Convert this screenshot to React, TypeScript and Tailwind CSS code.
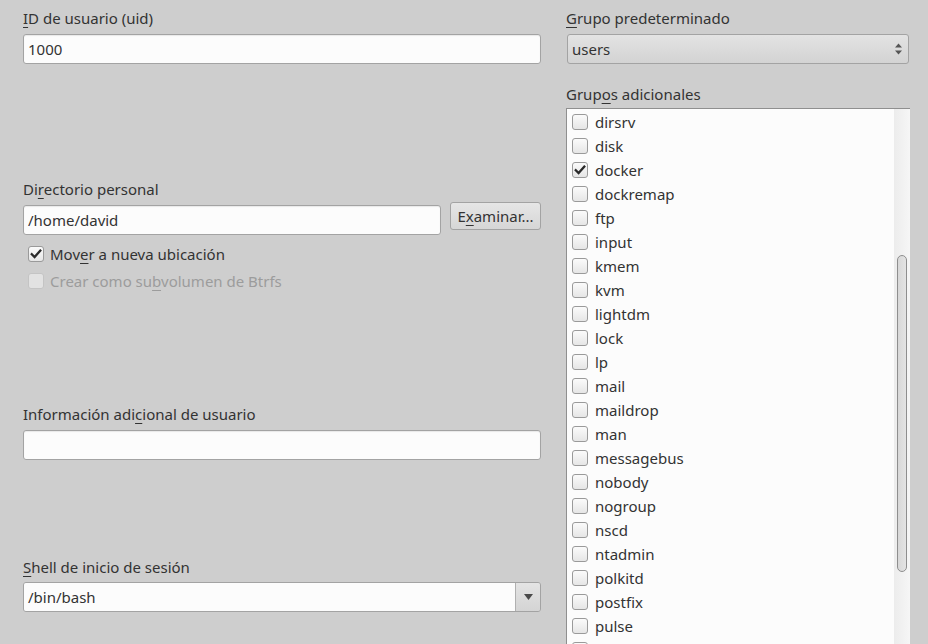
import React from "react";

const U = ({ children }: { children: React.ReactNode }) => (
  <span className="underline underline-offset-[3px] decoration-1">{children}</span>
);

const Check = ({ checked, disabled }: { checked?: boolean; disabled?: boolean }) => (
  <span
    className={
      "flex items-center justify-center w-[16px] h-[16px] rounded-[3px] border shrink-0 " +
      (disabled
        ? "border-[#c4c4c4] bg-[#e2e2e2]"
        : "border-[#9a9a9a] bg-gradient-to-b from-[#fbfbfb] to-[#e6e6e6]")
    }
  >
    {checked && (
      <svg width="12" height="12" viewBox="0 0 12 12">
        <path d="M1.8 6.2 L4.6 9 L10.3 2.6" fill="none" stroke="#2a2a2a" strokeWidth="2.3" strokeLinecap="square" />
      </svg>
    )}
  </span>
);

const groups: [string, boolean][] = [
  ["dirsrv", false],
  ["disk", false],
  ["docker", true],
  ["dockremap", false],
  ["ftp", false],
  ["input", false],
  ["kmem", false],
  ["kvm", false],
  ["lightdm", false],
  ["lock", false],
  ["lp", false],
  ["mail", false],
  ["maildrop", false],
  ["man", false],
  ["messagebus", false],
  ["nobody", false],
  ["nogroup", false],
  ["nscd", false],
  ["ntadmin", false],
  ["polkitd", false],
  ["postfix", false],
  ["pulse", false],
  ["root", false],
  ["shadow", false],
];

const inputCls =
  "shrink-0 h-[30px] bg-[#fcfcfc] border border-[#a3a3a3] rounded-[3px] px-[4px] flex items-center shadow-[inset_0_1px_1px_rgba(0,0,0,0.08)]";

export default function App() {
  return (
    <div
      className="w-[928px] h-[644px] overflow-hidden bg-[#cecece] text-[#333] text-[15px] flex items-start gap-[25px] pl-[23px]"
      style={{ fontFamily: '"Noto Sans", "Open Sans", sans-serif' }}
    >
      {/* Left column */}
      <div className="w-[518px] flex flex-col">
        <div className="shrink-0 h-[20px] mt-[8px] leading-[20px]"><U>I</U>D de usuario (uid)</div>
        <div className={inputCls + " mt-[6px]"}>1000</div>

        <div className="shrink-0 h-[20px] mt-[115px] leading-[20px]">Di<U>r</U>ectorio personal</div>
        <div className="shrink-0 flex items-start mt-[6px]">
          <div className={inputCls + " w-[418px]"}>/home/david</div>
          <button className="ml-[9px] -mt-[3px] w-[91px] h-[28px] rounded-[3px] border border-[#a3a3a3] bg-gradient-to-b from-[#e6e6e6] to-[#d6d6d6] text-[15px] leading-none flex items-center justify-center">
            E<U>x</U>aminar...
          </button>
        </div>
        <div className="shrink-0 flex items-center gap-[6px] ml-[5px] mt-[9px] h-[20px]">
          <Check checked />
          <span>Mov<U>e</U>r a nueva ubicación</span>
        </div>
        <div className="shrink-0 flex items-center gap-[6px] ml-[5px] mt-[7px] h-[20px] text-[#9c9c9c]">
          <Check disabled />
          <span>Crear como su<U>b</U>volumen de Btrfs</span>
        </div>

        <div className="shrink-0 h-[20px] mt-[113px] leading-[20px]">Información adi<U>c</U>ional de usuario</div>
        <div className={inputCls + " mt-[6px]"}></div>

        <div className="shrink-0 h-[20px] mt-[97px] leading-[20px]"><U>S</U>hell de inicio de sesión</div>
        <div className="shrink-0 flex mt-[5px] h-[30px] border border-[#a3a3a3] rounded-[3px] overflow-hidden">
          <div className="flex-1 bg-[#fcfcfc] px-[4px] flex items-center">/bin/bash</div>
          <div className="w-[25px] border-l border-[#b0b0b0] bg-gradient-to-b from-[#e4e4e4] to-[#d4d4d4] flex items-center justify-center">
            <svg width="9" height="6" viewBox="0 0 9 6">
              <path d="M0 0 H9 L4.5 6 Z" fill="#4a4a4a" />
            </svg>
          </div>
        </div>
      </div>

      {/* Right column */}
      <div className="w-[344px] flex flex-col">
        <div className="shrink-0 h-[20px] mt-[8px] leading-[20px]"><U>G</U>rupo predeterminado</div>
        <div className="shrink-0 mt-[6px] h-[30px] ml-[1px] w-[342px] rounded-[3px] border border-[#a3a3a3] bg-gradient-to-b from-[#e3e3e3] to-[#d3d3d3] flex items-center justify-between pl-[4px] pr-[6px]">
          <span>users</span>
          <svg width="7" height="12" viewBox="0 0 7 12">
            <path d="M0 4.5 H7 L3.5 0.5 Z" fill="#555" />
            <path d="M0 7.5 H7 L3.5 11.5 Z" fill="#555" />
          </svg>
        </div>

        <div className="shrink-0 h-[20px] mt-[20px] leading-[20px]">Grup<U>o</U>s adicionales</div>
        <div className="shrink-0 mt-[4px] h-[600px] flex border-t border-l border-[#8f8f8f] bg-[#fcfcfc]">
          <div className="flex-1 flex flex-col pt-[1px]">
            {groups.map(([name, checked]) => (
              <div key={name} className="h-[24px] flex items-center gap-[7px] pl-[5px] shrink-0">
                <Check checked={checked} />
                <span>{name}</span>
              </div>
            ))}
          </div>
          <div className="w-[16px] bg-gradient-to-r from-[#ececec] to-[#f6f6f6] flex justify-center pt-[146px]">
            <div className="w-[10px] h-[317px] rounded-[5px] border border-[#8e8e8e] bg-gradient-to-r from-[#d8d8d8] to-[#e4e4e4]" />
          </div>
        </div>
      </div>
    </div>
  );
}
